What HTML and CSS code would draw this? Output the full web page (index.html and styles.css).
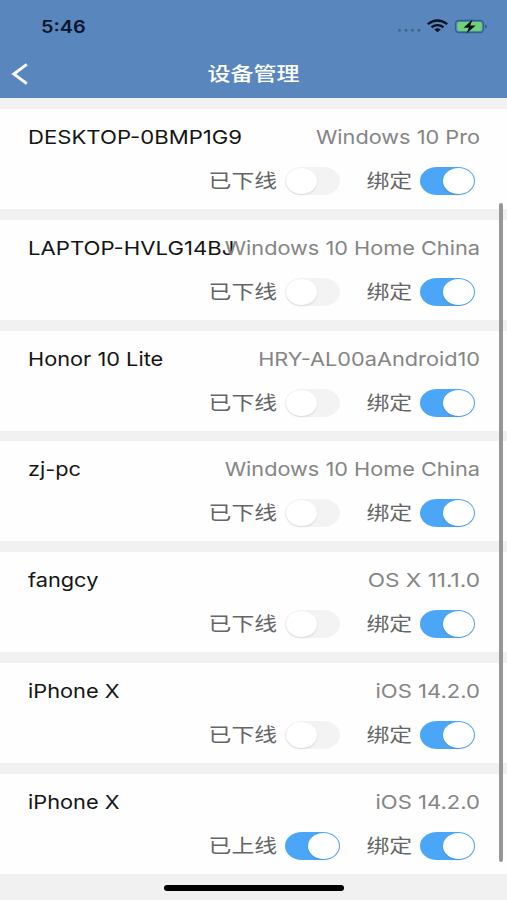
FILE: index.html
```
<!DOCTYPE html>
<html lang="zh-CN">
<head>
<meta charset="utf-8">
<title>设备管理</title>
<link rel="stylesheet" href="styles.css">
</head>
<body>
<div class="screen">
  <header class="header">
    <div class="status">
      <span class="time">5:46</span>
      <svg class="status-icons" width="92" height="20" viewBox="0 0 92 20">
        <g fill="#41658f"><circle cx="3.500" cy="13.300" r="1.500"/><circle cx="10" cy="13.300" r="1.500"/><circle cx="16.500" cy="13.300" r="1.500"/><circle cx="23" cy="13.300" r="1.500"/></g>
        <g fill="none" stroke="#07111f" stroke-width="2.300"><path d="M31.800 7.200Q41.500-.2 51.200 7.200"/><path d="M35.500 10.300Q41.500 5.900 47.500 10.300"/></g>
        <path fill="#07111f" d="M38.300 12.400Q41.500 10.200 44.700 12.400L41.500 15.300z"/>
        <rect x="59.500" y="3.500" width="28" height="12" rx="3.500" fill="none" stroke="#35608c" stroke-width="1.300"/>
        <rect x="61.300" y="5" width="24.500" height="9" rx="2" fill="#6fd274"/>
        <path d="M89 7.500q2 .4 2 2t-2 2z" fill="#35608c"/>
        <path d="M76.500 2.500L67.500 10.700h5.300L70.500 16.500 79.700 8.400h-5.400z" fill="#07111f"/>
      </svg>
    </div>
    <div class="nav">
      <svg class="back" width="18" height="24" viewBox="0 0 18 24"><path d="M15.800 2.300L2.800 12l13 9.700" fill="none" stroke="#fff" stroke-width="2.900"/></svg>
      <h1 class="title">设备管理</h1>
    </div>
  </header>
  <main class="list">
    <section class="card"><div class="row"><span class="name caps">DESKTOP-0BMP1G9</span><span class="os">Windows 10 Pro</span></div><div class="controls"><span class="label">已下线</span><i class="switch"></i><span class="label bind">绑定</span><i class="switch on"></i></div></section>
    <section class="card"><div class="row"><span class="name caps">LAPTOP-HVLG14BJ</span><span class="os">Windows 10 Home China</span></div><div class="controls"><span class="label">已下线</span><i class="switch"></i><span class="label bind">绑定</span><i class="switch on"></i></div></section>
    <section class="card"><div class="row"><span class="name">Honor 10 Lite</span><span class="os">HRY-AL00aAndroid10</span></div><div class="controls"><span class="label">已下线</span><i class="switch"></i><span class="label bind">绑定</span><i class="switch on"></i></div></section>
    <section class="card"><div class="row"><span class="name">zj-pc</span><span class="os">Windows 10 Home China</span></div><div class="controls"><span class="label">已下线</span><i class="switch"></i><span class="label bind">绑定</span><i class="switch on"></i></div></section>
    <section class="card"><div class="row"><span class="name">fangcy</span><span class="os mac">OS X 11.1.0</span></div><div class="controls"><span class="label">已下线</span><i class="switch"></i><span class="label bind">绑定</span><i class="switch on"></i></div></section>
    <section class="card"><div class="row"><span class="name">iPhone X</span><span class="os ios">iOS 14.2.0</span></div><div class="controls"><span class="label">已下线</span><i class="switch"></i><span class="label bind">绑定</span><i class="switch on"></i></div></section>
    <section class="card"><div class="row"><span class="name">iPhone X</span><span class="os ios">iOS 14.2.0</span></div><div class="controls"><span class="label">已上线</span><i class="switch on"></i><span class="label bind">绑定</span><i class="switch on"></i></div></section>
  </main>
  <div class="scrollbar"></div>
  <div class="home-bar"></div>
</div>
</body>
</html>
```
FILE: styles.css
```
* { box-sizing: border-box; }
body { margin: 0; font-family: Inter, "Noto Sans CJK SC", sans-serif; }
.screen { position: relative; width: 507px; height: 900px; overflow: hidden; background: #f1f1f1; }
.header { height: 98px; background: #5987bd; }
.status { height: 50px; padding: 3px 19px 0 41px; display: flex; align-items: center; justify-content: space-between; }
.time { font-size: 17px; font-weight: 600; line-height: 20px; color: #07162c; transform: scaleX(1.17); transform-origin: left; }
.nav { height: 48px; display: grid; grid-template-columns: 60px 1fr 60px; align-items: center; }
.back { margin-left: 11px; }
.title { margin: 0; padding-top: 2px; text-align: center; color: #fff; font-size: 19px; font-weight: 500; line-height: 28px; transform: scaleX(1.21); }
.list { padding-top: 11px; display: flex; flex-direction: column; gap: 10.8px; }
.card { height: 100px; padding: 15px 27px 0 28px; background: #fefefe; }
.row { height: 28px; display: flex; justify-content: space-between; align-items: center; }
.name, .os { width: 0; flex: none; white-space: nowrap; font-size: 19px; line-height: 28px; }
.name { color: #151515; transform: scaleX(1.145); transform-origin: left; }
.caps { transform: scaleX(1.165); }
.os { display: flex; justify-content: flex-end; color: #858585; transform: scaleX(1.143); transform-origin: right; }
.mac { transform: scaleX(1.19); }
.ios { transform: scaleX(1.16); }
.controls { margin-top: 15px; height: 28px; padding-right: 5px; display: flex; justify-content: flex-end; align-items: center; }
.label { padding-top: 2px; font-size: 19px; line-height: 28px; color: #656565; font-weight: 400; transform: scaleX(1.2); transform-origin: right; margin-right: 8px; white-space: nowrap; }
.bind { margin-left: 34px; }
.switch { width: 55px; height: 28px; border-radius: 17px / 14px; background: #f3f3f3; padding: 1px; display: flex; }
.switch::before { content: ""; width: 31px; height: 26px; border-radius: 50%; background: #fff; box-shadow: 0 1px 2px rgba(0, 0, 0, .12); }
.switch.on { background: #4ba6f7; justify-content: flex-end; }
.scrollbar { position: absolute; left: 499px; top: 203px; width: 4px; height: 659px; border-radius: 2px; background: #969696; }
.home-bar { position: absolute; left: 164px; top: 885px; width: 180px; height: 6px; border-radius: 3px; background: #000; }
```
